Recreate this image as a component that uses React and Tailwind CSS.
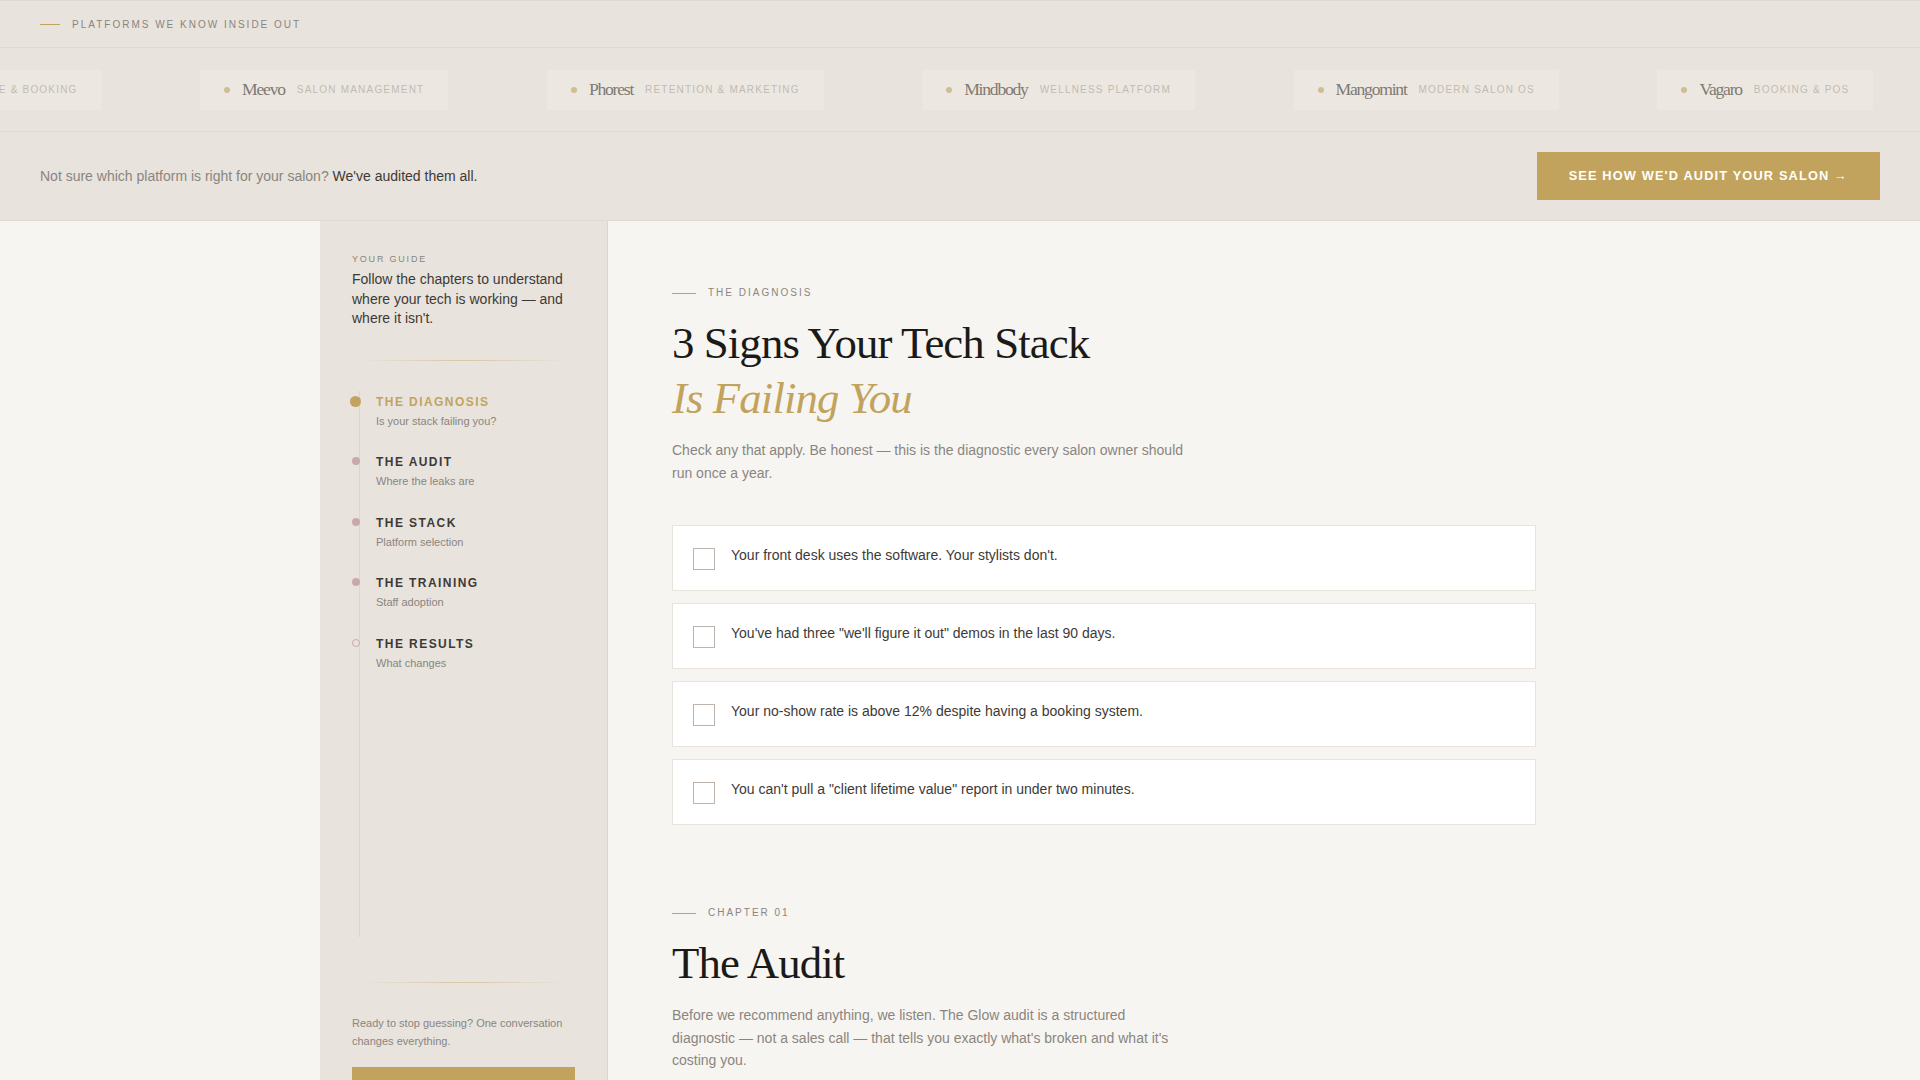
const sans = "font-['Liberation_Sans',sans-serif]";
const serif = "font-['Liberation_Serif',serif]";

const platforms = [
  { name: "Boulevard", sub: "Premium software & booking" },
  { name: "Meevo", sub: "Salon management" },
  { name: "Phorest", sub: "Retention & marketing" },
  { name: "Mindbody", sub: "Wellness platform" },
  { name: "Mangomint", sub: "Modern salon OS" },
  { name: "Vagaro", sub: "Booking & POS" },
];

const chapters = [
  { title: "The Diagnosis", sub: "Is your stack failing you?", active: true },
  { title: "The Audit", sub: "Where the leaks are" },
  { title: "The Stack", sub: "Platform selection" },
  { title: "The Training", sub: "Staff adoption" },
  { title: "The Results", sub: "What changes", hollow: true },
];

const signs = [
  "Your front desk uses the software. Your stylists don't.",
  `You've had three "we'll figure it out" demos in the last 90 days.`,
  "Your no-show rate is above 12% despite having a booking system.",
  `You can't pull a "client lifetime value" report in under two minutes.`,
];

const Divider = () => (
  <div className="mx-2 h-px bg-gradient-to-r from-transparent via-[#c2a35d]/45 to-transparent" />
);

const Eyebrow = ({ children }) => (
  <div className="flex items-center gap-3">
    <span className="h-px w-6 bg-[#c2a35d]" />
    <span className="text-[10px] leading-[16px] uppercase tracking-[0.2em] text-[#8a8580]">
      {children}
    </span>
  </div>
);

const PlatformChip = ({ name, sub }) => (
  <div className="flex h-10 shrink-0 items-center gap-3 bg-[#ece8e1] px-6">
    <span className="h-1.5 w-1.5 rounded-full bg-[#d0bd92]" />
    <span className={`${serif} text-[17.6px] leading-none tracking-[-0.07em] text-[#7f7a74]`}>{name}</span>
    <span className="text-[10px] uppercase tracking-[0.12em] text-[#c0bbb4]">{sub}</span>
  </div>
);

const ChapterItem = ({ title, sub, active, hollow }) => (
  <div className="relative h-[60.5px] pl-4">
    {active ? (
      <span className="absolute left-[-10px] top-[5px] h-[11px] w-[11px] rounded-full bg-[#c2a35d]" />
    ) : hollow ? (
      <span className="absolute left-[-8px] top-[6px] h-2 w-2 rounded-full border border-[#c9a9ad] bg-[#e8e3dc]" />
    ) : (
      <span className="absolute left-[-8px] top-[6px] h-2 w-2 rounded-full bg-[#c9a9ad]" />
    )}
    <div className={`text-[12px] leading-[22px] font-bold uppercase tracking-[0.12em] ${active ? "text-[#c2a35d]" : "text-[#3d3a36]"}`}>
      {title}
    </div>
    <div className="text-[11px] leading-[16px] text-[#8a8580]">{sub}</div>
  </div>
);

const Sign = ({ text }) => (
  <label className="flex gap-4 border border-[#e8e3dc] bg-white p-5">
    <span className="mt-0.5 h-[22px] w-[22px] shrink-0 border border-[#bdb3ab] bg-white" />
    <span className="text-[14px] leading-[18px] text-[#3d3a36]">{text}</span>
  </label>
);

export default function App() {
  return (
    <div className={`${sans} flex h-screen flex-col overflow-hidden bg-[#f7f5f1]`}>
      {/* platform strip */}
      <div className="shrink-0 border-b border-[#e0dad2] bg-[#e8e3dc]">
        <div className="flex h-[48px] items-center gap-3 border-t border-b border-[#e0dad2] px-10">
          <span className="h-px w-5 bg-[#c2a35d]" />
          <span className="text-[10px] uppercase tracking-[0.2em] text-[#8a8580]">Platforms we know inside out</span>
        </div>
        <div className="flex h-[84px] items-center overflow-hidden border-b border-[#e0dad2]">
          <div className="ml-[-235px] flex items-center gap-[98.5px]">
            {platforms.map((p) => (
              <PlatformChip key={p.name} {...p} />
            ))}
          </div>
        </div>
        <div className="flex h-[88px] items-center justify-between px-10">
          <p className="pt-px text-[14px] text-[#8a8580]">
            Not sure which platform is right for your salon? <span className="text-[#3d3a36]">We've audited them all.</span>
          </p>
          <button className="h-12 bg-[#c2a35d] px-8 text-[12.8px] font-bold uppercase tracking-[0.089em] text-white">
            See how we'd audit your salon →
          </button>
        </div>
      </div>

      <div className="flex min-h-0 flex-1">
        <div className="w-80 shrink-0" />
        {/* guide sidebar */}
        <aside className="flex h-[894px] w-72 shrink-0 flex-col border-r border-[#dcd6ce] bg-[#e8e3dc] px-8 pt-8">
          <div className="text-[9px] leading-[12px] uppercase tracking-[0.2em] text-[#8a8580]">Your guide</div>
          <p className="mt-[5px] text-[14px] leading-[19.6px] text-[#3d3a36]">
            Follow the chapters to understand where your tech is working — and where it isn't.
          </p>
          <div className="mt-[31px]"><Divider /></div>
          <nav className="ml-[7px] mt-[30px] flex-1 border-l border-[#dcd6ce]">
            {chapters.map((c) => (
              <ChapterItem key={c.title} {...c} />
            ))}
          </nav>
          <div className="mt-[45px]"><Divider /></div>
          <p className="mt-[31px] text-[11px] leading-[18px] text-[#8a8580]">
            Ready to stop guessing? One conversation changes everything.
          </p>
          <button className="mt-[17px] h-12 shrink-0 bg-[#c2a35d] text-[12px] font-bold uppercase tracking-[0.1em] text-white">
            Book your audit
          </button>
        </aside>

        {/* chapters */}
        <main className="min-w-0 flex-1 px-16 pt-16">
          <section className="w-[864px]">
            <Eyebrow>The Diagnosis</Eyebrow>
            <h1 className={`${serif} mt-[15px] text-[44.8px] leading-[55px] font-normal tracking-[-0.02em] text-[#1a1a18]`}>
              3 Signs Your Tech Stack
              <br />
              <em className="text-[#c2a35d]">Is Failing You</em>
            </h1>
            <p className="mt-[13px] max-w-[520px] text-[14px] leading-[23px] text-[#8a8580]">
              Check any that apply. Be honest — this is the diagnostic every salon owner should run once a year.
            </p>
            <div className="mt-10 flex flex-col gap-3">
              {signs.map((s) => (
                <Sign key={s} text={s} />
              ))}
            </div>
          </section>
          <section className="mt-20 w-[864px]">
            <Eyebrow>Chapter 01</Eyebrow>
            <h2 className={`${serif} mt-[15px] text-[44.8px] leading-[55px] font-normal tracking-[-0.02em] text-[#1a1a18]`}>
              The Audit
            </h2>
            <p className="mt-[13px] max-w-[520px] text-[14px] leading-[22.7px] text-[#8a8580]">
              Before we recommend anything, we listen. The Glow audit is a structured diagnostic — not a sales call — that tells you exactly what's broken and what it's costing you.
            </p>
          </section>
        </main>
      </div>
    </div>
  );
}
